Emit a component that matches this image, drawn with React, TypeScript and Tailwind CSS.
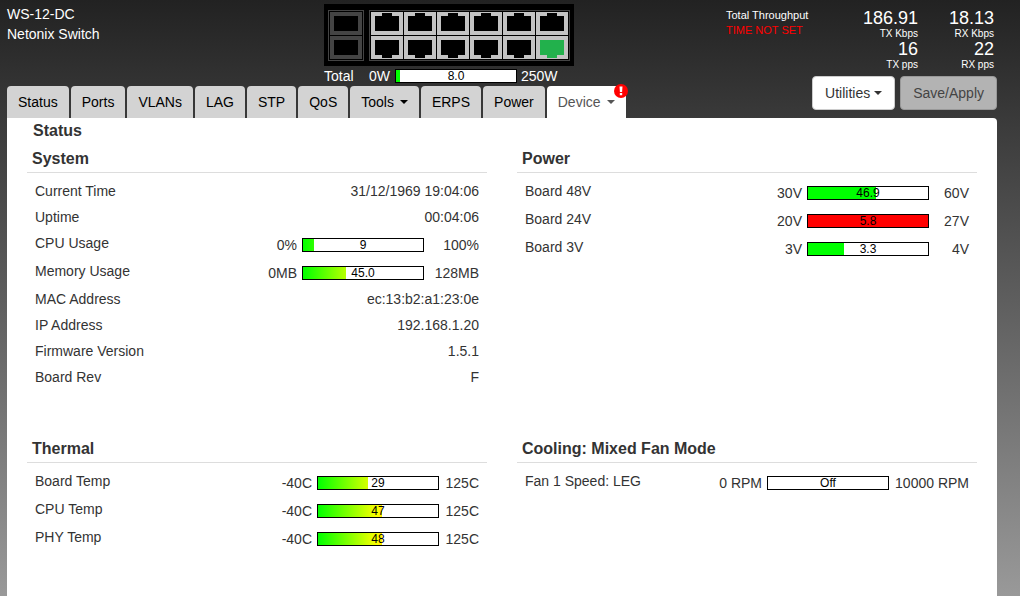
import type { ReactNode } from "react"

type MeterProps = {
  label: string
  min: string
  max: string
  value: string
  percent: number
  fill?: "heat" | "green" | "red"
  maxWidth?: string
}

const tabs = [
  { name: "Status" },
  { name: "Ports" },
  { name: "VLANs" },
  { name: "LAG" },
  { name: "STP" },
  { name: "QoS" },
  { name: "Tools", menu: true },
  { name: "ERPS" },
  { name: "Power" },
  { name: "Device", menu: true, active: true, alert: true },
]

const fills = {
  heat: "bg-[linear-gradient(to_right,#00ff00,#ffff00,#ff0000)]",
  green: "bg-[#00ff00]",
  red: "bg-[#ff0000]",
}

function Caret() {
  return <span className="inline-block border-x-4 border-t-4 border-x-transparent border-t-current" />
}

function Bar({ value, percent, fill = "heat", label }: { value: string; percent: number; fill?: keyof typeof fills; label: string }) {
  return (
    <div role="img" aria-label={`${label} ${value}`} className="relative h-[14px] w-[122px] shrink-0 border border-black bg-white">
      <div className="h-full overflow-hidden" style={{ width: `${percent}%` }}>
        <div className={`h-full w-[120px] ${fills[fill]}`} />
      </div>
      <span className="absolute inset-0 text-center text-xs leading-3 text-black">{value}</span>
    </div>
  )
}

function PortPanel() {
  const columns = [47, 80, 113, 146, 179, 212]
  return (
    <svg width="250" height="62" viewBox="0 0 250 62" shapeRendering="crispEdges" role="img" aria-label="Switch ports">
      <rect width="250" height="62" fill="#000" />
      {/* SFP cages */}
      <rect x="4.5" y="6.5" width="35" height="50" fill="none" stroke="#444" />
      {[8, 32].map((y) => (
        <g key={y}>
          <rect x="6" y={y} width="32" height="23" fill="#444" />
          <rect x="10" y={y + 4} width="24" height="15" fill="#000" />
        </g>
      ))}
      {/* RJ45 jacks */}
      <rect x="45.5" y="6.5" width="200" height="50" fill="none" stroke="#444" />
      {columns.map((x, i) => (
        <g key={x}>
          <rect x={x} y="8" width="32" height="23" fill="#c3c3c3" />
          <path d={`M${x + 4} 12h7v-3h10v3h7v15h-24z`} fill="#000" />
          <rect x={x} y="32" width="32" height="23" fill="#c3c3c3" />
          <path d={`M${x + 4} 36h24v15h-7v3h-10v-3h-7z`} fill={i === 5 ? "#22b14c" : "#000"} />
        </g>
      ))}
    </svg>
  )
}

function Rate({ value, unit }: { value: string; unit: string }) {
  return (
    <div className="text-right">
      <div className="text-lg leading-5">{value}</div>
      <div className="text-[10px] leading-[11px]">{unit}</div>
    </div>
  )
}

function Section({ title, children }: { title: string; children: ReactNode }) {
  return (
    <section className="min-w-0">
      <h3 className="border-b border-[#ddd] pb-px pl-[5px] text-base leading-6 font-bold">{title}</h3>
      <table className="mt-[5px] w-full">
        <tbody>{children}</tbody>
      </table>
    </section>
  )
}

function TextRow({ label, value }: { label: string; value: string }) {
  return (
    <tr className="h-[26px]">
      <th scope="row" className="pl-2 text-left font-normal">{label}</th>
      <td className="pr-2 text-right">{value}</td>
    </tr>
  )
}

function MeterRow({ label, min, max, value, percent, fill, maxWidth = "w-10" }: MeterProps) {
  return (
    <tr className="h-7">
      <th scope="row" className="pb-0.5 pl-2 text-left font-normal">{label}</th>
      <td className="pt-0.5 pr-2">
        <div className="flex items-center justify-end">
          <span className="mr-[5px]">{min}</span>
          <Bar label={label} value={value} percent={percent} fill={fill} />
          <span className={`text-right whitespace-nowrap ${maxWidth}`}>{max}</span>
        </div>
      </td>
    </tr>
  )
}

export default function App() {
  return (
    <div className="flex min-h-screen flex-col bg-[linear-gradient(to_bottom,#222222,#3a3a3a_20%,#999999)] pr-[23px] pl-[7px] font-['Liberation_Sans',Arial,sans-serif] text-sm leading-5 text-[#333]">
      <header className="flex justify-between text-white">
        <div className="flex flex-col">
          <div className="flex h-[86px]">
            <div className="w-[317px] pt-1">
              <h1>WS-12-DC</h1>
              <p>Netonix Switch</p>
            </div>
            <div className="pt-1">
              <PortPanel />
              <div className="flex items-center">
                <span className="w-[45px]">Total</span>
                <span className="mr-[5px]">0W</span>
                <Bar label="Total" value="8.0" percent={3} fill="green" />
                <span className="ml-1">250W</span>
              </div>
            </div>
          </div>

          <nav className="flex gap-0.5">
            {tabs.map((tab) => (
              <button
                key={tab.name}
                type="button"
                className={`relative h-8 rounded-t px-[11px] whitespace-nowrap ${tab.active ? "bg-white text-[#555]" : "bg-[#d3d3d3] text-black"}`}
              >
                <span className="flex items-center gap-1.5">
                  {tab.name}
                  {tab.menu && <Caret />}
                </span>
                {tab.alert && (
                  <svg className="absolute -top-0.5 -right-0.5" width="14" height="14" viewBox="0 0 14 14" aria-label="Alert">
                    <circle cx="7" cy="7" r="7" fill="#f00" />
                    <path d="M5.5 2.5h3l-.4 5.5h-2.2zM5.8 9h2.4v2.2h-2.4z" fill="#fff" />
                  </svg>
                )}
              </button>
            ))}
          </nav>
        </div>

        <div className="flex flex-col pt-2">
          <div className="flex h-[68px] justify-end pr-[3px]">
            <div className="w-[100px] text-[11px] leading-[15px]">
              <p>Total Throughput</p>
              <p className="text-[#f00]">TIME NOT SET</p>
            </div>
            <div className="w-[92px]">
              <Rate value="186.91" unit="TX Kbps" />
              <Rate value="16" unit="TX pps" />
            </div>
            <div className="w-[76px]">
              <Rate value="18.13" unit="RX Kbps" />
              <Rate value="22" unit="RX pps" />
            </div>
          </div>
          <div className="flex justify-end gap-[5px]">
            <button type="button" className="flex h-[34px] items-center gap-1 rounded border border-[#ccc] bg-white px-3 text-[#333]">
              Utilities
              <Caret />
            </button>
            <button type="button" className="h-[34px] rounded border border-[#999] bg-[#b3b3b3] px-3 text-[#444]">
              Save/Apply
            </button>
          </div>
        </div>
      </header>

      <main className="grow rounded-tr bg-white px-5 pt-px">
        <h2 className="pl-1.5 text-base leading-6 font-bold">Status</h2>
        <div className="mt-1 grid grid-cols-2 gap-x-[30px] gap-y-[47px]">
          <Section title="System">
            <TextRow label="Current Time" value="31/12/1969 19:04:06" />
            <TextRow label="Uptime" value="00:04:06" />
            <MeterRow label="CPU Usage" min="0%" max="100%" value="9" percent={9} maxWidth="w-[55px]" />
            <MeterRow label="Memory Usage" min="0MB" max="128MB" value="45.0" percent={36} maxWidth="w-[55px]" />
            <TextRow label="MAC Address" value="ec:13:b2:a1:23:0e" />
            <TextRow label="IP Address" value="192.168.1.20" />
            <TextRow label="Firmware Version" value="1.5.1" />
            <TextRow label="Board Rev" value="F" />
          </Section>

          <Section title="Power">
            <MeterRow label="Board 48V" min="30V" max="60V" value="46.9" percent={57} fill="green" />
            <MeterRow label="Board 24V" min="20V" max="27V" value="5.8" percent={100} fill="red" />
            <MeterRow label="Board 3V" min="3V" max="4V" value="3.3" percent={30} fill="green" />
          </Section>

          <Section title="Thermal">
            <MeterRow label="Board Temp" min="-40C" max="125C" value="29" percent={42} />
            <MeterRow label="CPU Temp" min="-40C" max="125C" value="47" percent={53} />
            <MeterRow label="PHY Temp" min="-40C" max="125C" value="48" percent={53} />
          </Section>

          <Section title="Cooling: Mixed Fan Mode">
            <MeterRow label="Fan 1 Speed: LEG" min="0 RPM" max="10000 RPM" value="Off" percent={0} maxWidth="w-20" />
          </Section>
        </div>
      </main>
    </div>
  )
}
